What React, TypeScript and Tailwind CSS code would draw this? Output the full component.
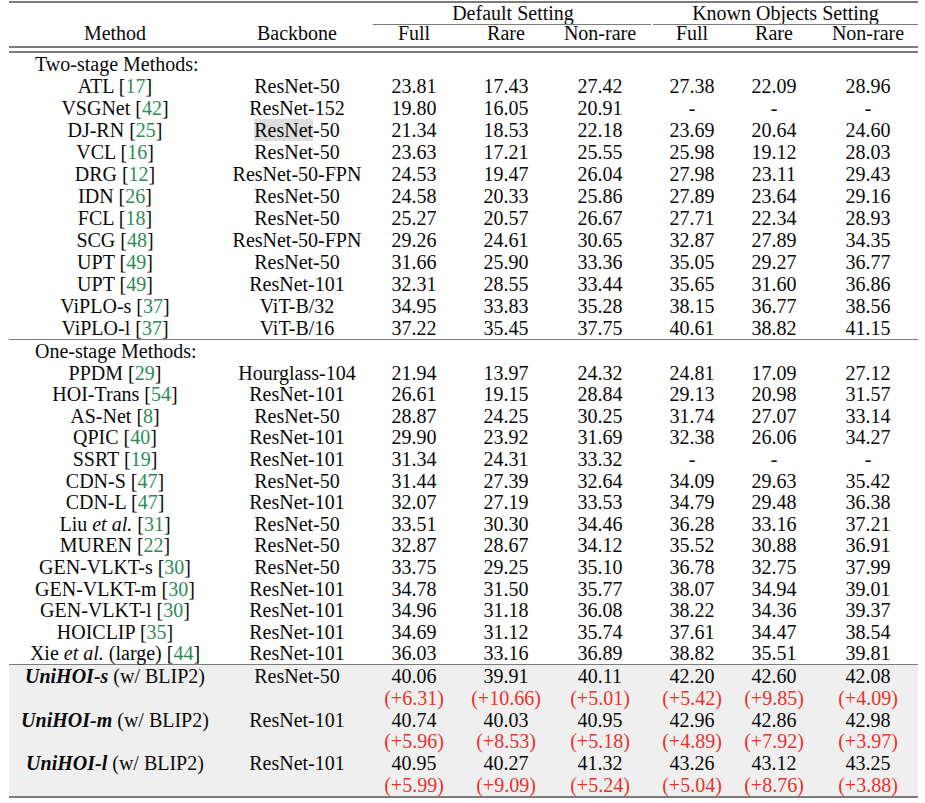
import React from "react";

type Row = {
  method: React.ReactNode;
  cite?: string;
  backbone: React.ReactNode;
  vals: string[];
};

const cols = "grid grid-cols-[212px_152px_82px_102px_86px_98px_66px_111px]";

const twoStage: Row[] = [
  { method: "ATL", cite: "17", backbone: "ResNet-50", vals: ["23.81", "17.43", "27.42", "27.38", "22.09", "28.96"] },
  { method: "VSGNet", cite: "42", backbone: "ResNet-152", vals: ["19.80", "16.05", "20.91", "-", "-", "-"] },
  {
    method: "DJ-RN",
    cite: "25",
    backbone: (
      <>
        <span className="bg-[#dedede]">ResNet</span>-50
      </>
    ),
    vals: ["21.34", "18.53", "22.18", "23.69", "20.64", "24.60"],
  },
  { method: "VCL", cite: "16", backbone: "ResNet-50", vals: ["23.63", "17.21", "25.55", "25.98", "19.12", "28.03"] },
  { method: "DRG", cite: "12", backbone: "ResNet-50-FPN", vals: ["24.53", "19.47", "26.04", "27.98", "23.11", "29.43"] },
  { method: "IDN", cite: "26", backbone: "ResNet-50", vals: ["24.58", "20.33", "25.86", "27.89", "23.64", "29.16"] },
  { method: "FCL", cite: "18", backbone: "ResNet-50", vals: ["25.27", "20.57", "26.67", "27.71", "22.34", "28.93"] },
  { method: "SCG", cite: "48", backbone: "ResNet-50-FPN", vals: ["29.26", "24.61", "30.65", "32.87", "27.89", "34.35"] },
  { method: "UPT", cite: "49", backbone: "ResNet-50", vals: ["31.66", "25.90", "33.36", "35.05", "29.27", "36.77"] },
  { method: "UPT", cite: "49", backbone: "ResNet-101", vals: ["32.31", "28.55", "33.44", "35.65", "31.60", "36.86"] },
  { method: "ViPLO-s", cite: "37", backbone: "ViT-B/32", vals: ["34.95", "33.83", "35.28", "38.15", "36.77", "38.56"] },
  { method: "ViPLO-l", cite: "37", backbone: "ViT-B/16", vals: ["37.22", "35.45", "37.75", "40.61", "38.82", "41.15"] },
];

const oneStage: Row[] = [
  { method: "PPDM", cite: "29", backbone: "Hourglass-104", vals: ["21.94", "13.97", "24.32", "24.81", "17.09", "27.12"] },
  { method: "HOI-Trans", cite: "54", backbone: "ResNet-101", vals: ["26.61", "19.15", "28.84", "29.13", "20.98", "31.57"] },
  { method: "AS-Net", cite: "8", backbone: "ResNet-50", vals: ["28.87", "24.25", "30.25", "31.74", "27.07", "33.14"] },
  { method: "QPIC", cite: "40", backbone: "ResNet-101", vals: ["29.90", "23.92", "31.69", "32.38", "26.06", "34.27"] },
  { method: "SSRT", cite: "19", backbone: "ResNet-101", vals: ["31.34", "24.31", "33.32", "-", "-", "-"] },
  { method: "CDN-S", cite: "47", backbone: "ResNet-50", vals: ["31.44", "27.39", "32.64", "34.09", "29.63", "35.42"] },
  { method: "CDN-L", cite: "47", backbone: "ResNet-101", vals: ["32.07", "27.19", "33.53", "34.79", "29.48", "36.38"] },
  {
    method: (
      <>
        Liu <i>et al.</i>
      </>
    ),
    cite: "31",
    backbone: "ResNet-50",
    vals: ["33.51", "30.30", "34.46", "36.28", "33.16", "37.21"],
  },
  { method: "MUREN", cite: "22", backbone: "ResNet-50", vals: ["32.87", "28.67", "34.12", "35.52", "30.88", "36.91"] },
  { method: "GEN-VLKT-s", cite: "30", backbone: "ResNet-50", vals: ["33.75", "29.25", "35.10", "36.78", "32.75", "37.99"] },
  { method: "GEN-VLKT-m", cite: "30", backbone: "ResNet-101", vals: ["34.78", "31.50", "35.77", "38.07", "34.94", "39.01"] },
  { method: "GEN-VLKT-l", cite: "30", backbone: "ResNet-101", vals: ["34.96", "31.18", "36.08", "38.22", "34.36", "39.37"] },
  { method: "HOICLIP", cite: "35", backbone: "ResNet-101", vals: ["34.69", "31.12", "35.74", "37.61", "34.47", "38.54"] },
  {
    method: (
      <>
        Xie <i>et al.</i> (large)
      </>
    ),
    cite: "44",
    backbone: "ResNet-101",
    vals: ["36.03", "33.16", "36.89", "38.82", "35.51", "39.81"],
  },
];

const ours = [
  { name: "UniHOI-s", backbone: "ResNet-50", vals: ["40.06", "39.91", "40.11", "42.20", "42.60", "42.08"], gains: ["(+6.31)", "(+10.66)", "(+5.01)", "(+5.42)", "(+9.85)", "(+4.09)"] },
  { name: "UniHOI-m", backbone: "ResNet-101", vals: ["40.74", "40.03", "40.95", "42.96", "42.86", "42.98"], gains: ["(+5.96)", "(+8.53)", "(+5.18)", "(+4.89)", "(+7.92)", "(+3.97)"] },
  { name: "UniHOI-l", backbone: "ResNet-101", vals: ["40.95", "40.27", "41.32", "43.26", "43.12", "43.25"], gains: ["(+5.99)", "(+9.09)", "(+5.24)", "(+5.04)", "(+8.76)", "(+3.88)"] },
];

function Cells({ vals, red }: { vals: string[]; red?: boolean }) {
  return (
    <>
      {vals.map((v, i) => (
        <div key={i} className={`text-center ${i === 5 ? "pl-[11px]" : ""} ${red ? "text-[#e8322d]" : ""}`}>
          {v}
        </div>
      ))}
    </>
  );
}

function DataRow({ row, h }: { row: Row; h: string }) {
  return (
    <div className={`${cols} ${h} items-center`}>
      <div className="text-center">
        {row.method} [<span className="text-[#2e8b57]">{row.cite}</span>]
      </div>
      <div className="text-center">{row.backbone}</div>
      <Cells vals={row.vals} />
    </div>
  );
}

export default function App() {
  return (
    <div className="w-[925px] h-[803px] bg-white pt-px pl-[9px] font-['Liberation_Serif',serif] text-[20px] leading-[22px] text-[#0a0a0a]">
      <div className="w-[909px]">
        <div className="h-[2px] bg-[#7c7c7c]" />

        {/* header row 1 */}
        <div className="grid grid-cols-[364px_280px_265px] h-[22px]">
          <div />
          <div className="flex flex-col">
            <div className="h-[21px] text-center leading-[21px]">Default Setting</div>
            <div className="h-px bg-[#7c7c7c] mr-[2px]" />
          </div>
          <div className="flex flex-col">
            <div className="h-[21px] text-center leading-[21px]">Known Objects Setting</div>
            <div className="h-px bg-[#7c7c7c]" />
          </div>
        </div>

        {/* header row 2 */}
        <div className={`${cols} h-[21px] leading-[17px]`}>
          <div className="text-center">Method</div>
          <div className="text-center">Backbone</div>
          <Cells vals={["Full", "Rare", "Non-rare", "Full", "Rare", "Non-rare"]} />
        </div>

        <div className="h-[1.5px] bg-[#7c7c7c]" />
        <div className="h-[3.5px]" />
        <div className="h-[1.5px] bg-[#7c7c7c]" />

        {/* two-stage */}
        <div className="h-[22px] pl-[26px] flex items-center">Two-stage Methods:</div>
        {twoStage.map((r, i) => (
          <DataRow key={i} row={r} h="h-[22px]" />
        ))}

        <div className="h-[1.5px] bg-[#7c7c7c]" />

        {/* one-stage */}
        <div className="h-[21.6px] pl-[26px] flex items-center">One-stage Methods:</div>
        {oneStage.map((r, i) => (
          <DataRow key={i} row={r} h="h-[21.6px]" />
        ))}

        <div className="h-[1.5px] bg-[#7c7c7c]" />

        {/* ours */}
        <div className="bg-[#efefef]">
          {ours.map((o) => (
            <React.Fragment key={o.name}>
              <div className={`${cols} h-[21.7px] items-center`}>
                <div className="text-center">
                  <b>
                    <i>{o.name}</i>
                  </b>{" "}
                  (w/ BLIP2)
                </div>
                <div className="text-center">{o.backbone}</div>
                <Cells vals={o.vals} />
              </div>
              <div className={`${cols} h-[21.7px] items-center`}>
                <div />
                <div />
                <Cells vals={o.gains} red />
              </div>
            </React.Fragment>
          ))}
        </div>

        <div className="h-[2px] bg-[#7c7c7c]" />
      </div>
    </div>
  );
}
